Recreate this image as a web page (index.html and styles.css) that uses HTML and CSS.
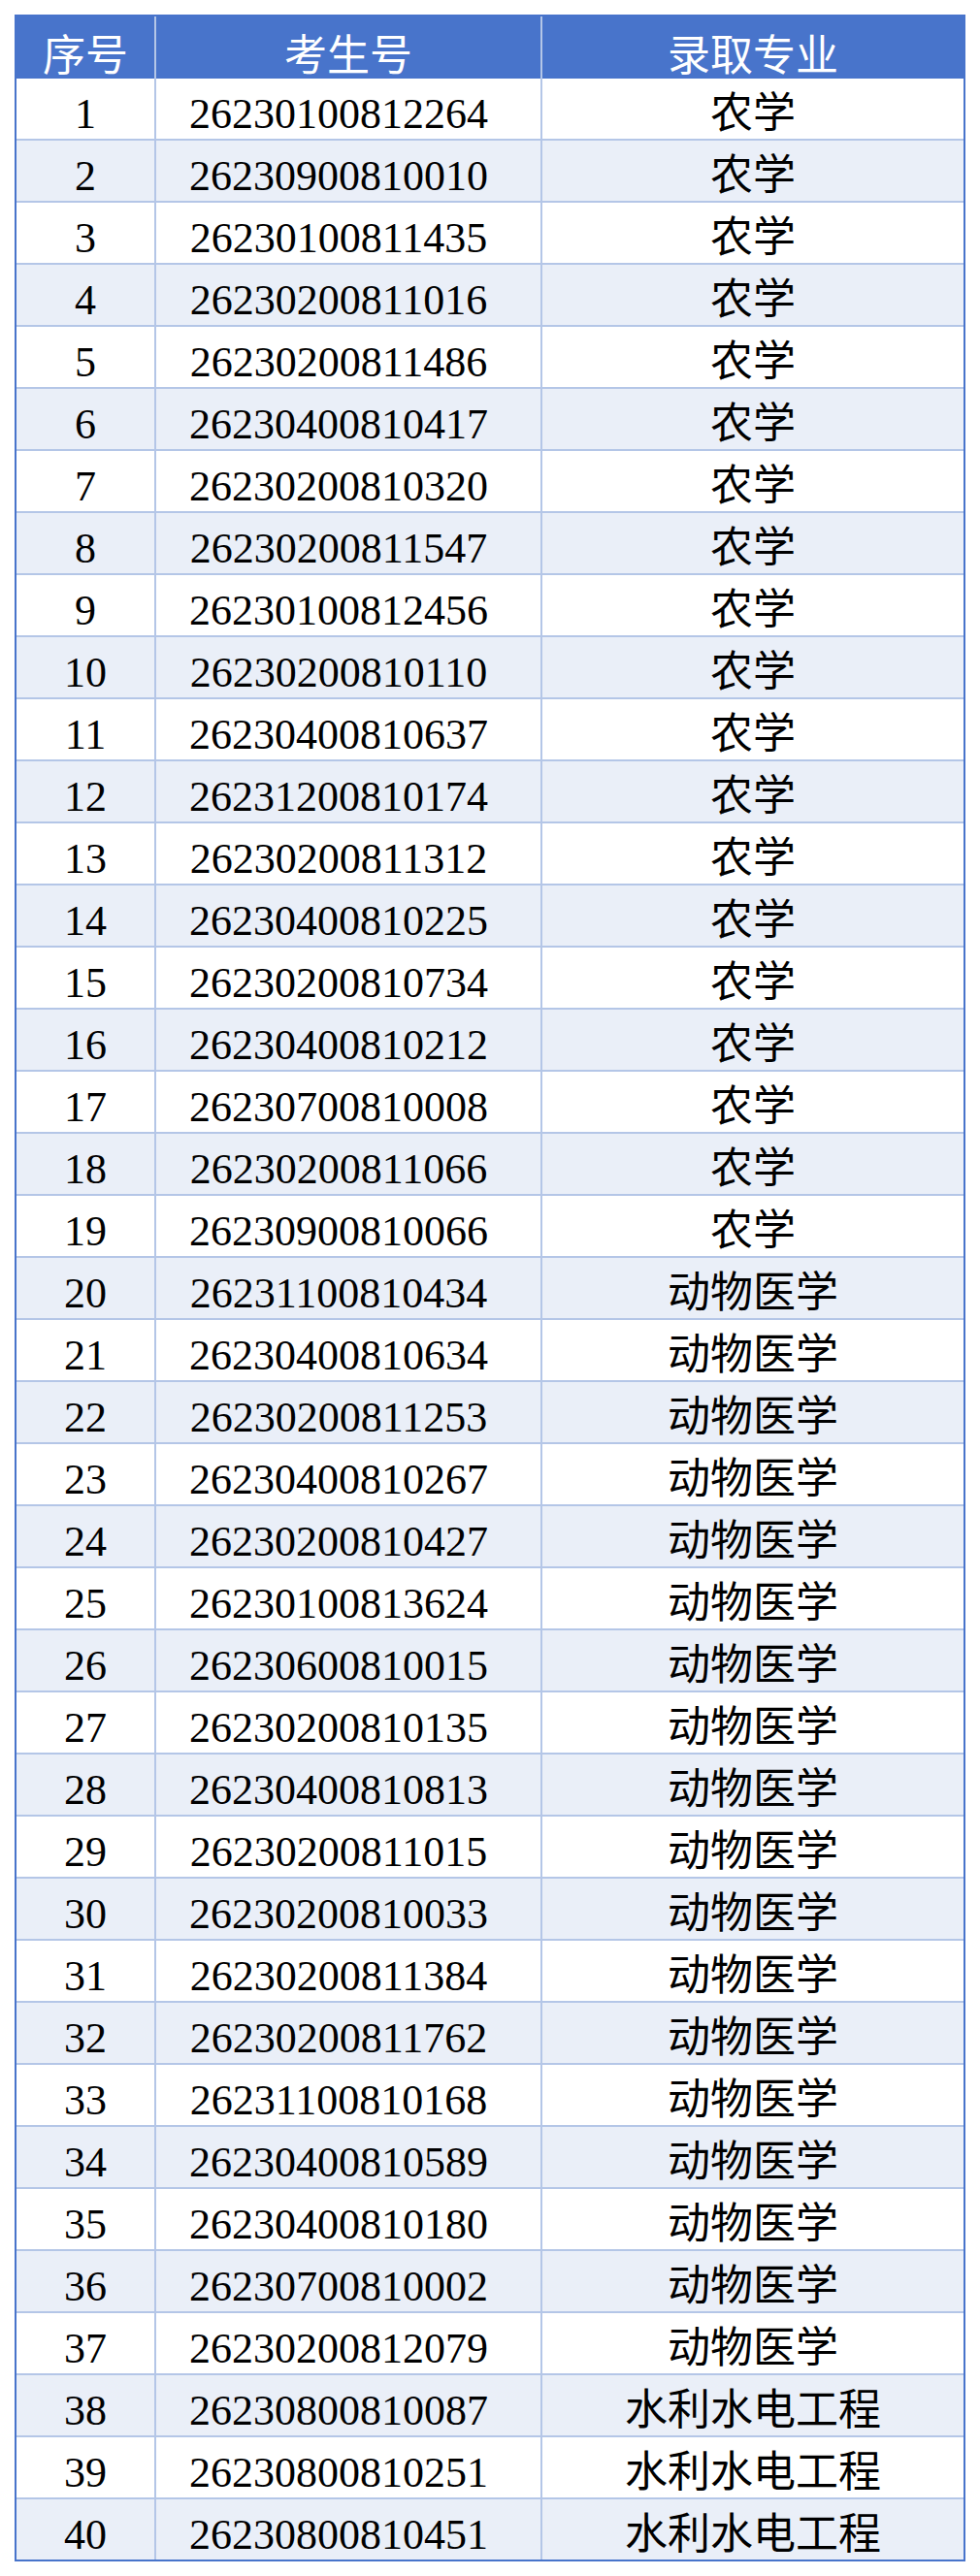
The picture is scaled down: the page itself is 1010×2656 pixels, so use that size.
FILE: index.html
```html
<!DOCTYPE html>
<html lang="zh-CN">
<head>
<meta charset="utf-8">
<title>录取名单</title>
<link rel="stylesheet" href="styles.css">
</head>
<body>
<table class="roster">
  <thead>
    <tr><th class="c-no">序号</th><th class="c-id">考生号</th><th class="c-major">录取专业</th></tr>
  </thead>
  <tbody>
    <tr><td>1</td><td class="id">26230100812264</td><td>农学</td></tr>
    <tr><td>2</td><td class="id">26230900810010</td><td>农学</td></tr>
    <tr><td>3</td><td class="id">26230100811435</td><td>农学</td></tr>
    <tr><td>4</td><td class="id">26230200811016</td><td>农学</td></tr>
    <tr><td>5</td><td class="id">26230200811486</td><td>农学</td></tr>
    <tr><td>6</td><td class="id">26230400810417</td><td>农学</td></tr>
    <tr><td>7</td><td class="id">26230200810320</td><td>农学</td></tr>
    <tr><td>8</td><td class="id">26230200811547</td><td>农学</td></tr>
    <tr><td>9</td><td class="id">26230100812456</td><td>农学</td></tr>
    <tr><td>10</td><td class="id">26230200810110</td><td>农学</td></tr>
    <tr><td>11</td><td class="id">26230400810637</td><td>农学</td></tr>
    <tr><td>12</td><td class="id">26231200810174</td><td>农学</td></tr>
    <tr><td>13</td><td class="id">26230200811312</td><td>农学</td></tr>
    <tr><td>14</td><td class="id">26230400810225</td><td>农学</td></tr>
    <tr><td>15</td><td class="id">26230200810734</td><td>农学</td></tr>
    <tr><td>16</td><td class="id">26230400810212</td><td>农学</td></tr>
    <tr><td>17</td><td class="id">26230700810008</td><td>农学</td></tr>
    <tr><td>18</td><td class="id">26230200811066</td><td>农学</td></tr>
    <tr><td>19</td><td class="id">26230900810066</td><td>农学</td></tr>
    <tr><td>20</td><td class="id">26231100810434</td><td>动物医学</td></tr>
    <tr><td>21</td><td class="id">26230400810634</td><td>动物医学</td></tr>
    <tr><td>22</td><td class="id">26230200811253</td><td>动物医学</td></tr>
    <tr><td>23</td><td class="id">26230400810267</td><td>动物医学</td></tr>
    <tr><td>24</td><td class="id">26230200810427</td><td>动物医学</td></tr>
    <tr><td>25</td><td class="id">26230100813624</td><td>动物医学</td></tr>
    <tr><td>26</td><td class="id">26230600810015</td><td>动物医学</td></tr>
    <tr><td>27</td><td class="id">26230200810135</td><td>动物医学</td></tr>
    <tr><td>28</td><td class="id">26230400810813</td><td>动物医学</td></tr>
    <tr><td>29</td><td class="id">26230200811015</td><td>动物医学</td></tr>
    <tr><td>30</td><td class="id">26230200810033</td><td>动物医学</td></tr>
    <tr><td>31</td><td class="id">26230200811384</td><td>动物医学</td></tr>
    <tr><td>32</td><td class="id">26230200811762</td><td>动物医学</td></tr>
    <tr><td>33</td><td class="id">26231100810168</td><td>动物医学</td></tr>
    <tr><td>34</td><td class="id">26230400810589</td><td>动物医学</td></tr>
    <tr><td>35</td><td class="id">26230400810180</td><td>动物医学</td></tr>
    <tr><td>36</td><td class="id">26230700810002</td><td>动物医学</td></tr>
    <tr><td>37</td><td class="id">26230200812079</td><td>动物医学</td></tr>
    <tr><td>38</td><td class="id">26230800810087</td><td>水利水电工程</td></tr>
    <tr><td>39</td><td class="id">26230800810251</td><td>水利水电工程</td></tr>
    <tr><td>40</td><td class="id">26230800810451</td><td>水利水电工程</td></tr>
  </tbody>
</table>
</body>
</html>
```

FILE: styles.css
```css
html, body {
  margin: 0;
  padding: 0;
  background: #ffffff;
}

body {
  padding: 15px 0 0 15px;
  font-family: "Liberation Serif", "Noto Sans CJK SC", serif;
  color: #000000;
}

.roster {
  width: 980px;
  table-layout: fixed;
  border-collapse: separate;
  border-spacing: 0;
  border: 2px solid #4874cb;
}

.roster th,
.roster td {
  box-sizing: border-box;
  padding: 12px 0 0 0;
  font-size: 44px;
  line-height: 50px;
  font-weight: normal;
  text-align: center;
  white-space: nowrap;
  border-right: 2px solid #b4c6e7;
}

.roster th {
  background: #4874cb;
  color: #ffffff;
  padding-bottom: 2px;
  font-family: "Noto Sans CJK SC", "Liberation Serif", sans-serif;
}

.roster td {
  border-bottom: 2px solid #b4c6e7;
}

.roster th:last-child,
.roster td:last-child {
  border-right: 0;
}

.roster tbody tr:last-child td {
  border-bottom: 0;
}

.roster tbody tr:nth-child(even) td {
  background: #eaeff8;
}

.c-no {
  width: 144px;
}

.c-id {
  width: 398px;
}

.roster td.id {
  padding-right: 20px;
}
```
